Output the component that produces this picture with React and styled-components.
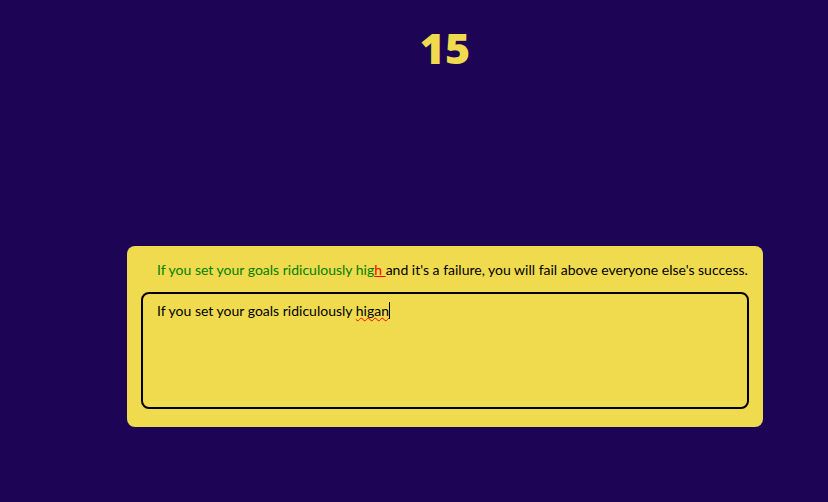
import { useState } from "react";
import styled, { createGlobalStyle } from "styled-components";

const GlobalStyle = createGlobalStyle`
  *, *::before, *::after {
    box-sizing: border-box;
  }

  body {
    margin: 0;
    background-color: #1e0455;
    font-family: Lato, sans-serif;
    font-size: 14px;
    line-height: 20px;
  }
`;

const Page = styled.main`
  display: flex;
  flex-direction: column;
  align-items: center;
  min-height: 100vh;
  padding: 20px 65px 75px 127px;
`;

const Timer = styled.div`
  flex: 1;
  font-family: "Open Sans", sans-serif;
  font-size: 43px;
  line-height: 56px;
  font-weight: 800;
  color: #f0db4f;
`;

const Card = styled.section`
  display: flex;
  flex-direction: column;
  gap: 12px;
  width: 100%;
  max-width: 700px;
  padding: 14px 14px 18px;
  border-radius: 8px;
  background-color: #f0db4f;
`;

const Quote = styled.label`
  padding-left: 16px;
  color: #000;
`;

const Letter = styled.span`
  color: ${({ $state }) =>
    ({ correct: "#008000", incorrect: "#ff0000" })[$state] || "inherit"};
  text-decoration: ${({ $state }) =>
    $state === "incorrect" ? "underline" : "none"};
`;

const InputWrapper = styled.div`
  position: relative;
  display: flex;
`;

const QuoteInput = styled.textarea`
  width: 100%;
  height: 117px;
  padding: 7px 14px;
  border: 2px solid #000;
  border-radius: 8px;
  outline: none;
  resize: none;
  overflow: hidden;
  background-color: transparent;
  caret-color: transparent;
  color: #000;
  font: inherit;
`;

// sits over the textarea and carries the spelling mark and the caret
const Marks = styled.div`
  position: absolute;
  inset: 0;
  padding: 9px 16px;
  white-space: pre-wrap;
  color: transparent;
  pointer-events: none;
`;

const Misspelled = styled.span`
  text-decoration: underline wavy #ff0000 1px;
  text-decoration-skip-ink: none;
  text-underline-offset: 1px;
`;

const Caret = styled.span`
  border-right: 1px solid #000;
`;

const QUOTE =
  "If you set your goals ridiculously high and it's a failure, you will fail above everyone else's success.";

function getState(typed, index) {
  if (index >= typed.length) return "pending";
  return typed[index] === QUOTE[index] ? "correct" : "incorrect";
}

// joins neighbouring letters that share a state
function getRuns(typed) {
  const runs = [];
  QUOTE.split("").forEach((letter, index) => {
    const state = getState(typed, index);
    const last = runs[runs.length - 1];
    if (last && last.state === state) {
      last.text += letter;
    } else {
      runs.push({ state, text: letter });
    }
  });
  return runs;
}

function App() {
  const [typed, setTyped] = useState("If you set your goals ridiculously higan");

  const wordStart = typed.lastIndexOf(" ") + 1;
  const word = typed.slice(wordStart);
  const LastWord = QUOTE.includes(word) ? "span" : Misspelled;

  return (
    <>
      <GlobalStyle />
      <Page>
        <Timer role="timer">15</Timer>
        <Card>
          <Quote htmlFor="quoteInput">
            {getRuns(typed).map((run, index) => (
              <Letter key={index} $state={run.state}>
                {run.text}
              </Letter>
            ))}
          </Quote>
          <InputWrapper>
            <QuoteInput
              id="quoteInput"
              spellCheck={false}
              value={typed}
              onChange={(e) => setTyped(e.target.value)}
            />
            <Marks aria-hidden="true">
              {typed.slice(0, wordStart)}
              <LastWord>{word}</LastWord>
              <Caret />
            </Marks>
          </InputWrapper>
        </Card>
      </Page>
    </>
  );
}

export default App;
